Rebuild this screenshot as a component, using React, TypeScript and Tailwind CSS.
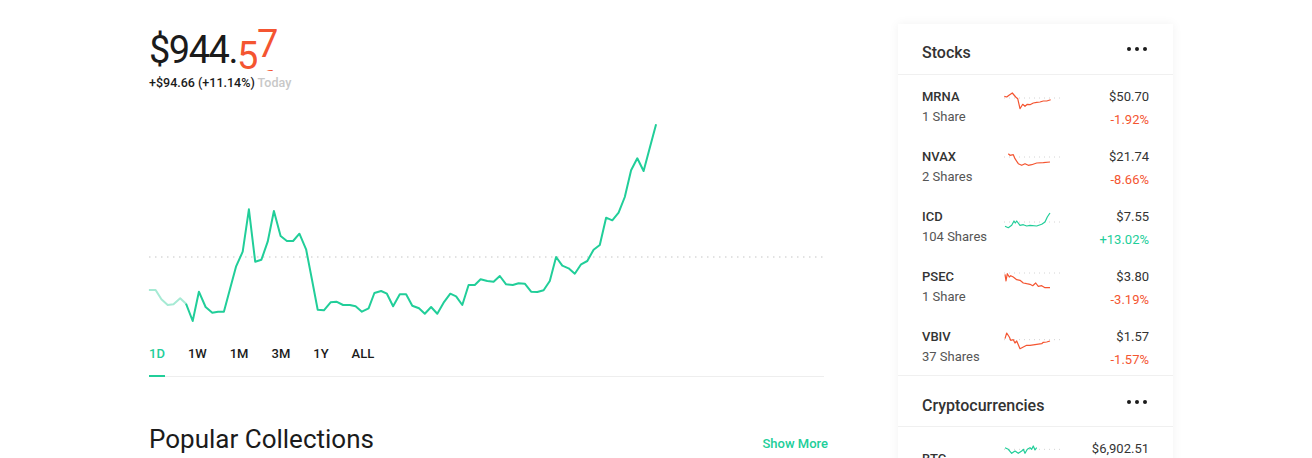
import React from 'react';

const GREEN = '#21ce99';
const RED = '#f45531';

// main chart, measured off the reference (x scaled by 2.24, y by 3)
const CHART: number[][] = [
  [20, 567], [35, 567], [48, 595], [62, 612], [75, 610], [90, 592], [103, 608], [118, 660], [132, 572], [147, 618],
  [162, 635], [175, 632], [188, 632], [202, 562], [215, 497], [230, 452], [244, 325], [258, 482], [272, 476], [286, 422],
  [300, 330], [315, 405], [329, 420], [343, 420], [357, 398], [372, 445], [385, 535], [398, 626], [412, 628], [427, 604],
  [440, 602], [455, 612], [470, 612], [483, 616], [497, 632], [512, 622], [525, 576], [540, 570], [553, 578], [567, 616],
  [582, 580], [596, 580], [610, 614], [625, 622], [638, 638], [652, 618], [666, 638], [680, 605], [695, 578], [708, 586],
  [722, 612], [736, 552], [750, 552], [763, 535], [778, 540], [792, 542], [806, 525], [820, 550], [835, 552], [848, 547],
  [862, 548], [876, 572], [890, 573], [904, 568], [918, 540], [932, 468], [946, 494], [960, 502], [974, 518], [988, 490],
  [1002, 480], [1016, 446], [1030, 432], [1044, 350], [1058, 358], [1072, 335], [1086, 288], [1100, 208], [1114, 172], [1128, 210],
  [1142, 140], [1156, 70],
];

const toChart = (pts: number[][]) => pts.map(([x, y]) => `${(x / 2.24 - 9).toFixed(1)},${(y / 3).toFixed(1)}`).join(' ');

interface Holding {
  symbol: string;
  shares?: string;
  price: string;
  change?: string;
  up: boolean;
  off: number;
  base: number;
  pts: number[][];
}

const stocks: Holding[] = [
  {
    symbol: 'MRNA', shares: '1 Share', price: '$50.70', change: '-1.92%', up: false, off: 73, base: 243,
    pts: [[343, 238], [350, 240], [357, 235], [367, 228], [377, 240], [383, 245], [390, 275], [398, 262], [405, 268], [412, 262], [420, 263], [430, 258], [440, 256], [450, 255], [460, 252], [470, 252], [482, 248]],
  },
  {
    symbol: 'NVAX', shares: '2 Shares', price: '$21.74', change: '-8.66%', up: false, off: 133, base: 420,
    pts: [[355, 410], [360, 415], [370, 413], [375, 425], [385, 440], [395, 445], [405, 440], [415, 445], [425, 443], [440, 438], [460, 437], [480, 435]],
  },
  {
    symbol: 'ICD', shares: '104 Shares', price: '$7.55', change: '+13.02%', up: true, off: 13, base: 75,
    pts: [[345, 88], [355, 92], [365, 85], [372, 72], [376, 78], [380, 72], [390, 85], [400, 83], [410, 87], [420, 85], [440, 87], [455, 82], [465, 75], [472, 60], [480, 48]],
  },
  {
    symbol: 'PSEC', shares: '1 Share', price: '$3.80', change: '-3.19%', up: false, off: 73, base: 228,
    pts: [[345, 232], [348, 252], [352, 230], [358, 240], [362, 236], [370, 240], [380, 248], [390, 250], [400, 258], [410, 260], [420, 262], [428, 266], [437, 258], [445, 268], [455, 266], [465, 272], [480, 272]],
  },
  {
    symbol: 'VBIV', shares: '37 Shares', price: '$1.57', change: '-1.57%', up: false, off: 133, base: 428,
    pts: [[345, 425], [350, 408], [358, 420], [362, 430], [370, 428], [375, 438], [380, 432], [390, 455], [400, 450], [410, 445], [420, 445], [440, 442], [455, 440], [460, 436], [470, 435], [480, 432]],
  },
];

const btc: Holding = {
  symbol: 'BTC', price: '$6,902.51', up: true, off: 76, base: 250,
  pts: [[345, 245], [355, 250], [365, 262], [375, 255], [385, 262], [395, 255], [400, 250], [405, 262], [412, 250], [420, 245], [425, 250], [430, 240], [435, 252], [440, 245]],
};

const Sparkline = ({ h }: { h: Holding }) => {
  const pts = h.pts.map(([x, y]) => `${(x / 3 - 112).toFixed(1)},${(y / 3 - h.off).toFixed(1)}`).join(' ');
  const by = h.base / 3 - h.off;
  return (
    <svg width="62" height="30" className="mt-[3px] shrink-0">
      <line x1="2" y1={by} x2="60" y2={by} stroke="#d4d4d4" strokeWidth="1" strokeDasharray="1 4" />
      <polyline points={pts} fill="none" stroke={h.up ? GREEN : RED} strokeWidth="1.2" strokeLinejoin="round" />
    </svg>
  );
};

const Dots = () => (
  <svg width="20" height="4" className="mt-[4px]">
    <circle cx="2" cy="2" r="2" fill="#1b1b1b" />
    <circle cx="10" cy="2" r="2" fill="#1b1b1b" />
    <circle cx="18" cy="2" r="2" fill="#1b1b1b" />
  </svg>
);

const Row = ({ h }: { h: Holding }) => (
  <div className="flex h-[60px] px-[24px] pt-[12px] text-[13px] leading-[20px] text-[#333]">
    <div className="w-[80px]">
      <div className="font-medium">{h.symbol}</div>
      <div className="text-[#555]">{h.shares}</div>
    </div>
    <Sparkline h={h} />
    <div className="flex-1 text-right">
      <div>{h.price}</div>
      <div className="mt-[3px]" style={{ color: h.up ? GREEN : RED }}>{h.change}</div>
    </div>
  </div>
);

const tabs = ['1D', '1W', '1M', '3M', '1Y', 'ALL'];

export default function App() {
  return (
    <div className="h-[458px] overflow-hidden bg-white text-[#1b1b1b]" style={{ fontFamily: 'Roboto, "Liberation Sans", sans-serif' }}>
      <div className="flex pl-[149px] pt-[24px]">
        <div className="w-[679px]">
          <div className="mt-[4px] flex h-[44px] items-start">
            <span className="text-[38px] leading-[44px] tracking-[-1.5px]">$944.</span>
            {/* rolling digits, caught mid-scroll */}
            <span className="h-[43px] w-[20px] overflow-hidden text-[38px] leading-[42px] text-[#f45531]">
              <span className="mt-[7px] flex flex-col">
                <span>5</span>
              </span>
            </span>
            <span className="h-[43px] w-[20px] overflow-hidden text-[38px] leading-[41px] text-[#f45531]">
              <span className="-mt-[4px] flex flex-col">
                <span>7</span>
                <span>6</span>
              </span>
            </span>
          </div>
          <div className="mt-[3px] text-[12.5px] font-medium leading-[16px]">
            +$94.66 (+11.14%) <span className="text-[#c8c8c8]">Today</span>
          </div>
          <svg width="675" height="230" className="mt-[10px] block overflow-visible">
            <line x1="0" y1="156" x2="675" y2="156" stroke="#d9d9d9" strokeWidth="1.5" strokeDasharray="1.5 4.5" />
            <polyline points={toChart(CHART.slice(0, 7))} fill="none" stroke="#a6ead4" strokeWidth="2" strokeLinejoin="round" />
            <polyline points={toChart(CHART.slice(6))} fill="none" stroke={GREEN} strokeWidth="2" strokeLinejoin="round" />
          </svg>
          <div className="mt-[13px] flex w-[675px] gap-[23px] border-b border-[#eeeeee]">
            {tabs.map((t, i) => (
              <div
                key={t}
                className={`-mb-px border-b-2 pb-[11px] text-[13px] font-medium leading-[20px] ${i === 0 ? 'border-[#21ce99] text-[#21ce99]' : 'border-transparent text-[#1b1b1b]'}`}
              >
                {t}
              </div>
            ))}
          </div>
          <div className="mt-[46px] flex items-baseline justify-between">
            <div className="text-[26px] leading-[32px]">Popular Collections</div>
            <div className="text-[13px] font-medium text-[#21ce99]">Show More</div>
          </div>
        </div>

        <div className="ml-[70px] w-[275px] shrink-0 bg-white shadow-[0_0_10px_rgba(0,0,0,0.06)]">
          <div className="flex h-[51px] justify-between border-b border-[#f0f0f0] pl-[24px] pr-[26px] pt-[19px]">
            <div className="text-[16px] font-medium leading-[20px] text-[#333]">Stocks</div>
            <Dots />
          </div>
          {stocks.map((s) => (
            <Row key={s.symbol} h={s} />
          ))}
          <div className="flex h-[52px] justify-between border-y border-[#f0f0f0] pl-[24px] pr-[26px] pt-[20px]">
            <div className="text-[16px] font-medium leading-[20px] text-[#333]">Cryptocurrencies</div>
            <Dots />
          </div>
          <div className="flex h-[60px] px-[24px] pt-[12px] text-[13px] leading-[20px] text-[#333]">
            <div className="w-[80px] pt-[10px] font-medium">{btc.symbol}</div>
            <Sparkline h={btc} />
            <div className="flex-1 text-right">{btc.price}</div>
          </div>
        </div>
      </div>
    </div>
  );
}
